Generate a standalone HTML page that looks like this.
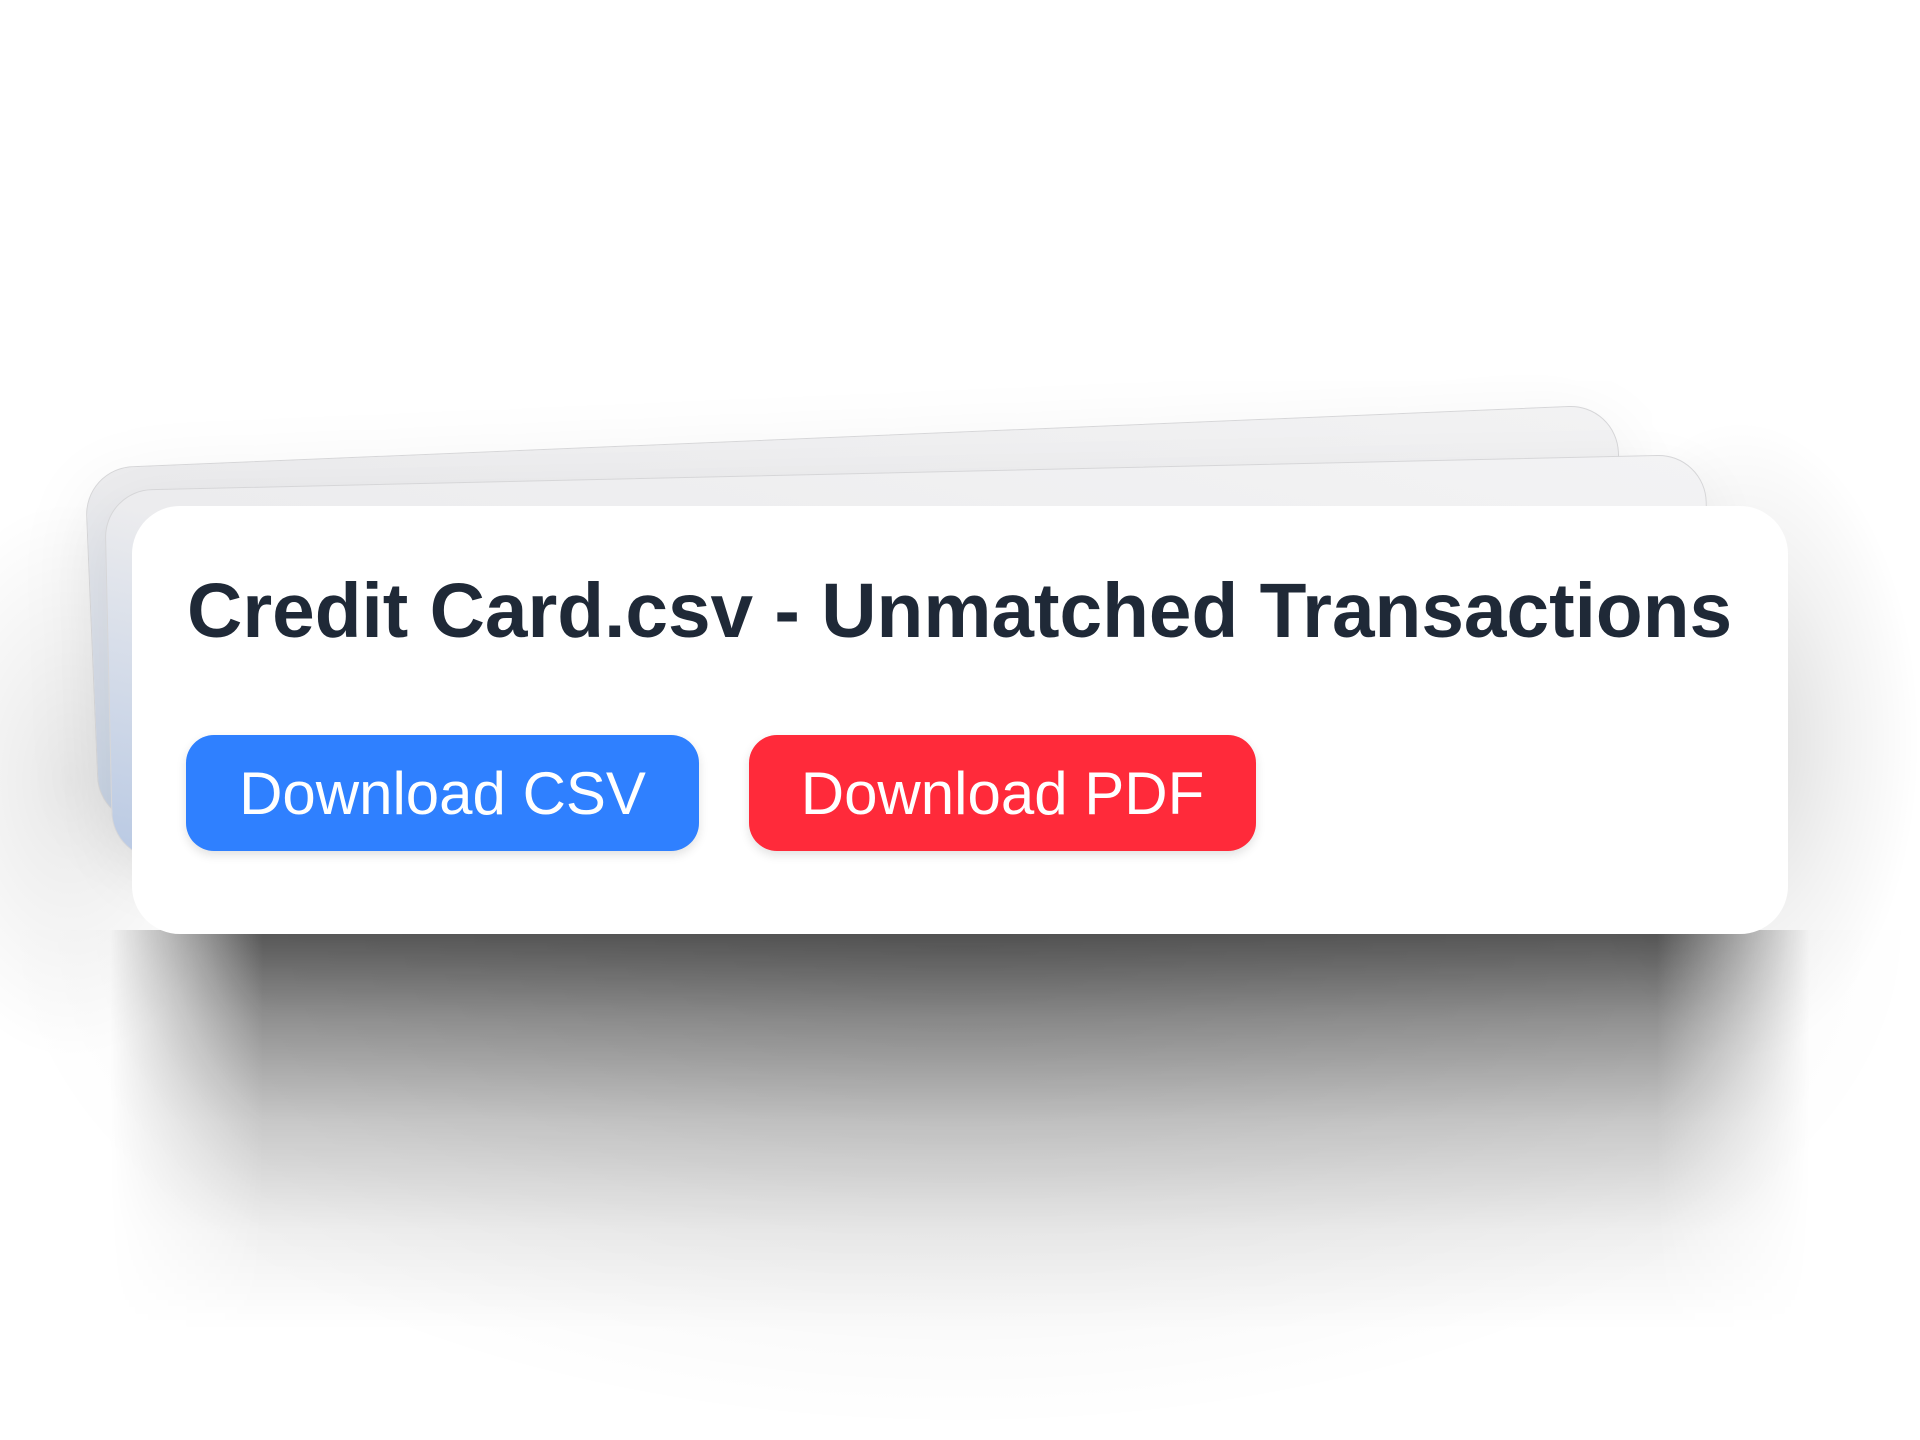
<!DOCTYPE html>
<html><head><meta charset="utf-8"><style>
html,body{margin:0;width:1920px;height:1440px;overflow:hidden;background:#fff;}
body{position:relative;font-family:"Liberation Sans",Arial,sans-serif;}
.card{position:absolute;border-radius:48px;}
.back{left:91px;top:436px;width:1532px;height:355px;transform:rotate(-2.4deg);
 background:linear-gradient(195deg,#f2f2f3 0%,#ebebed 55%,#c4d0e2 100%);border:1px solid #d6d6d8;
 box-shadow:0 20px 80px rgba(0,0,0,0.07);}
.mid{left:108px;top:472px;width:1600px;height:368px;transform:rotate(-1.3deg);
 background:linear-gradient(195deg,#f3f3f4 0%,#ececee 55%,#b9c9e3 100%);border:1px solid #d6d6d8;
 box-shadow:0 20px 60px rgba(0,0,0,0.07);}
.sh1{position:absolute;left:110px;top:930px;width:1700px;height:400px;
 background:linear-gradient(to bottom,rgba(0,0,0,0.66) 0%,rgba(0,0,0,0.42) 22%,rgba(0,0,0,0.2) 48%,rgba(0,0,0,0.06) 75%,rgba(0,0,0,0) 100%);
 -webkit-mask-image:linear-gradient(to right,transparent 0%,#000 9%,#000 91%,transparent 100%);
 mask-image:linear-gradient(to right,transparent 0%,#000 9%,#000 91%,transparent 100%);}
.sh2{position:absolute;left:0;top:930px;width:1920px;height:500px;
 background:radial-gradient(closest-side,rgba(0,0,0,0.1),rgba(0,0,0,0.04) 60%,rgba(0,0,0,0) 100%);
 background-size:1920px 1000px;background-position:0 -500px;background-repeat:no-repeat;}
.sh3{position:absolute;left:1560px;top:420px;width:360px;height:640px;
 background:radial-gradient(closest-side,rgba(0,0,0,0.15),rgba(0,0,0,0.05) 60%,rgba(0,0,0,0) 100%);}
.sh4{position:absolute;left:-100px;top:500px;width:340px;height:560px;
 background:radial-gradient(closest-side,rgba(0,0,0,0.09),rgba(0,0,0,0) 100%);}
.main{left:132px;top:506px;width:1656px;height:428px;background:#fff;}
h1{position:absolute;left:55px;top:62px;margin:0;font-size:76.6px;font-weight:bold;color:#1f2937;white-space:nowrap;}
.btn{position:absolute;top:229px;height:116px;border-radius:28px;color:#fff;font-size:60px;line-height:118px;text-align:center;
 box-shadow:0 4px 10px rgba(0,0,0,0.12);}
.b1{left:54px;width:513px;background:#2f80ff;}
.b2{left:617px;width:507px;background:#ff2a3a;}
</style></head><body>
<div class="sh2"></div>
<div class="sh3"></div>
<div class="sh4"></div>
<div class="card back"></div>
<div class="card mid"></div>
<div class="sh1"></div>
<div class="card main">
<h1>Credit Card.csv - Unmatched Transactions</h1>
<div class="btn b1">Download CSV</div>
<div class="btn b2">Download PDF</div>
</div>
</body></html>
